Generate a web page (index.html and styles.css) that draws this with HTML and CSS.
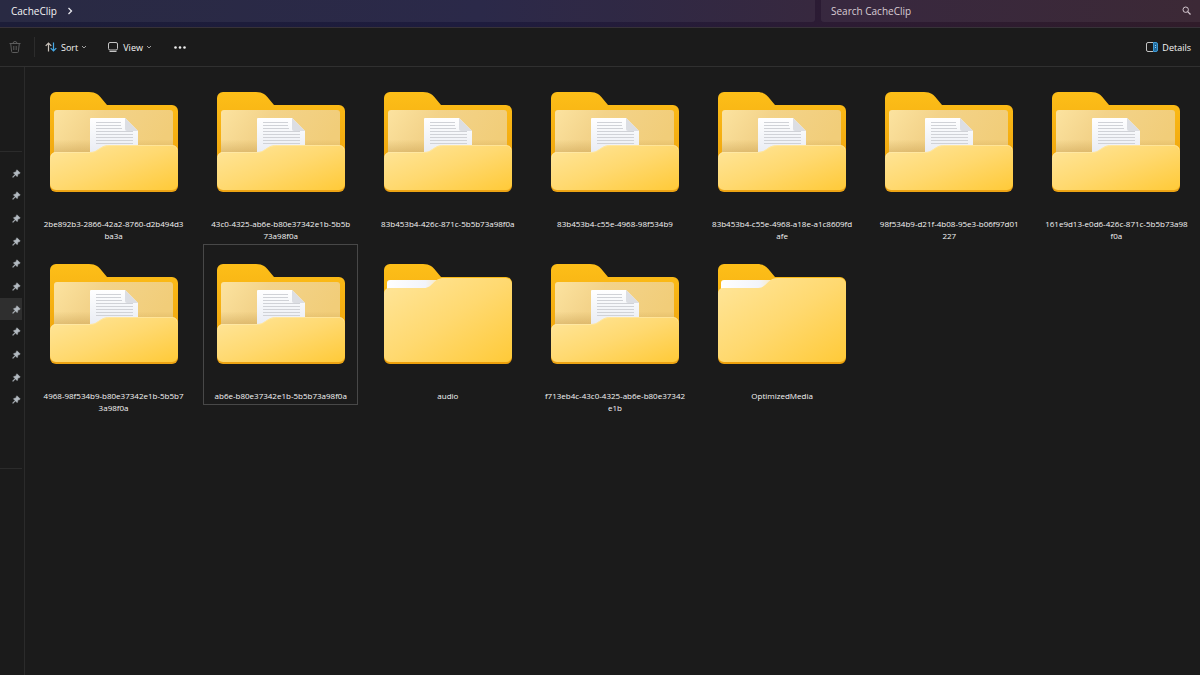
FILE: index.html
```
<!DOCTYPE html>
<html lang="en">
  <head>
    <meta charset="UTF-8" />
    <meta name="viewport" content="width=device-width, initial-scale=1.0" />
    <title>CacheClip</title>
    <link rel="stylesheet" href="styles.css">
  </head>
  <body>
    <!-- shared icons -->
    <svg class="defs" aria-hidden="true">
      <defs>
        <linearGradient id="back" x1="0" y1="0" x2="0" y2="1">
          <stop offset="0" stop-color="#fdbe18" />
          <stop offset="1" stop-color="#eda00c" />
        </linearGradient>
        <linearGradient id="inner" x1="0" y1="0" x2="1" y2="0.3">
          <stop offset="0" stop-color="#fce3a0" />
          <stop offset="0.4" stop-color="#f3d38a" />
          <stop offset="1" stop-color="#f1cd79" />
        </linearGradient>
        <linearGradient id="shade" x1="0" y1="0" x2="0" y2="1">
          <stop offset="0.7" stop-color="#b98d3c" stop-opacity="0" />
          <stop offset="1" stop-color="#b98d3c" stop-opacity="0.35" />
        </linearGradient>
        <linearGradient id="front" x1="0" y1="0" x2="1" y2="1">
          <stop offset="0" stop-color="#ffe69c" />
          <stop offset="0.5" stop-color="#ffd970" />
          <stop offset="1" stop-color="#ffca38" />
        </linearGradient>
        <linearGradient id="paper" x1="0" y1="0" x2="0" y2="1">
          <stop offset="0" stop-color="#ffffff" />
          <stop offset="1" stop-color="#e4e8f1" />
        </linearGradient>
        <linearGradient id="strip" x1="0" y1="0" x2="1" y2="0">
          <stop offset="0" stop-color="#ffffff" />
          <stop offset="0.7" stop-color="#f2f4fa" />
          <stop offset="1" stop-color="#fbe6b0" />
        </linearGradient>
      </defs>
      <symbol id="folder-files" viewBox="0 0 128 102">
        <path fill="url(#back)" d="M0 7a6 6 0 0 1 6-6H39C46 1 49 4 52 8L57 14H122a6 6 0 0 1 6 6V90H0Z" />
        <path fill="url(#inner)" d="M4 22a3 3 0 0 1 3-3H120a3 3 0 0 1 3 3V70H4Z" />
        <path fill="url(#shade)" d="M4 22a3 3 0 0 1 3-3H120a3 3 0 0 1 3 3V61H4Z" />
        <path fill="url(#paper)" d="M40 28a1 1 0 0 1 1-1H75L88 40V70H40Z" />
        <path fill="#dcdee3" d="M75 27V38a2 2 0 0 0 2 2H88Z" />
        <path fill="none" stroke="#d0d2d7" d="M46 31.500H71M46 34.500H71M46 37.500H72M46 40.500H83M46 43.500H83M46 46.500H83M46 49.500H83M46 52.500H83" />
        <path fill="#eda414" d="M0 67H128V95a6 6 0 0 1-6 6H6a6 6 0 0 1-6-6Z" />
        <path fill="url(#front)" d="M0 67a6 6 0 0 1 6-6H40C49 61 49 54 60 54H122a6 6 0 0 1 6 6V93a6 6 0 0 1-6 6H6a6 6 0 0 1-6-6Z" />
        <path fill="none" stroke="#ffeeb8" stroke-opacity="0.5" d="M1 66a5 5 0 0 1 5-4.500H40C49 61.500 49 54.500 60 54.500H122a5 5 0 0 1 5 4" />
      </symbol>
      <symbol id="folder-plain" viewBox="0 0 128 102">
        <path fill="url(#back)" d="M0 7a6 6 0 0 1 6-6H39C46 1 49 4 52 8L57 14H122a6 6 0 0 1 6 6V95a6 6 0 0 1-6 6H6a6 6 0 0 1-6-6Z" />
        <path fill="url(#strip)" d="M3 20a3 3 0 0 1 3-3H58V30H3Z" />
        <path fill="url(#front)" d="M0 30a5 5 0 0 1 5-5H40C49 25 49 15 60 15H122a6 6 0 0 1 6 6V93a6 6 0 0 1-6 6H6a6 6 0 0 1-6-6Z" />
      </symbol>
      <symbol id="pin" viewBox="0 0 10 10">
        <path fill="#b3bac1" stroke="#b3bac1" stroke-width="0.500" d="M5.500 0.800 9.200 4.500 8.300 5.200 7.800 5 6.300 6.500C6.500 7.400 6.300 8 5.700 8.500L3.900 6.700 1 9.500 0.500 9 3.300 6.100 1.500 4.300C2 3.700 2.700 3.500 3.500 3.700L5 2.200 4.800 1.700Z" />
      </symbol>
      <symbol id="chevron" viewBox="0 0 6 6">
        <path fill="none" stroke="#a0a0a0" d="M1 2 3 4 5 2" />
      </symbol>
    </svg>

    <header class="titlebar">
      <nav class="address" aria-label="Address">
        <a href="#">CacheClip</a>
        <svg class="crumb" viewBox="0 0 6 8" aria-hidden="true"><path fill="none" stroke="#e8e8ee" stroke-width="1.300" d="M1.500 1 4.500 4 1.500 7" /></svg>
      </nav>
      <form class="search">
        <input type="search" aria-label="Search CacheClip" placeholder="Search CacheClip" />
        <button type="button" aria-label="Search">
          <svg viewBox="0 0 9 9"><circle cx="3.700" cy="3.700" r="2.700" fill="none" stroke="#d5c8d0" /><path stroke="#d5c8d0" stroke-width="1.200" d="M5.700 5.700 8.500 8.500" /></svg>
        </button>
      </form>
    </header>

    <div class="toolbar">
      <button class="trash" type="button" aria-label="Delete">
        <svg viewBox="0 0 12 12" fill="none" stroke="#5c5c5c"><path d="M0.500 2.500H11.500M4 2.500a2 2 0 0 1 4 0M1.700 2.500 2.600 10.500a1 1 0 0 0 1 1H8.400a1 1 0 0 0 1-1L10.300 2.500M4.800 5V9M7.200 5V9" /></svg>
      </button>
      <button class="sort" type="button">
        <svg class="icon" viewBox="0 0 12 10" fill="none"><path stroke="#c9c2ba" stroke-width="1.200" d="M3.500 9.500V1M0.700 3.800 3.500 1 6.300 3.800" /><path stroke="#45a9e6" stroke-width="1.200" d="M8.500 0.500V9M5.700 6.200 8.500 9 11.300 6.200" /></svg>
        Sort
        <svg class="chevron"><use href="#chevron" /></svg>
      </button>
      <button class="view" type="button">
        <svg class="icon" viewBox="0 0 12 10" fill="none" stroke="#c4c4c4"><rect x="1.500" y="0.500" width="9" height="7.500" rx="1.500" /><path d="M2.500 9.500H9.500" /></svg>
        View
        <svg class="chevron"><use href="#chevron" /></svg>
      </button>
      <button class="more" type="button" aria-label="See more">
        <svg viewBox="0 0 12 3" fill="#eee"><circle cx="1.500" cy="1.500" r="1.300" /><circle cx="6" cy="1.500" r="1.300" /><circle cx="10.500" cy="1.500" r="1.300" /></svg>
      </button>
      <button class="details" type="button">
        <svg class="icon" viewBox="0 0 12 10"><path fill="#236a9c" stroke="#3e9bd6" d="M7.500 0.500H10a1.500 1.500 0 0 1 1.500 1.500V8A1.500 1.500 0 0 1 10 9.500H7.500Z" /><path fill="none" stroke="#c4c4c4" d="M7 0.500H2A1.500 1.500 0 0 0 0.500 2V8A1.500 1.500 0 0 0 2 9.500H7" /><path stroke="#8fd0f7" d="M9 3.500H10M9 5.500H10" /></svg>
        Details
      </button>
    </div>

    <div class="window">
      <aside class="sidebar">
        <ul class="pins">
          <li><svg><use href="#pin" /></svg></li>
          <li><svg><use href="#pin" /></svg></li>
          <li><svg><use href="#pin" /></svg></li>
          <li><svg><use href="#pin" /></svg></li>
          <li><svg><use href="#pin" /></svg></li>
          <li><svg><use href="#pin" /></svg></li>
          <li class="active"><svg><use href="#pin" /></svg></li>
          <li><svg><use href="#pin" /></svg></li>
          <li><svg><use href="#pin" /></svg></li>
          <li><svg><use href="#pin" /></svg></li>
          <li><svg><use href="#pin" /></svg></li>
        </ul>
      </aside>

      <main class="files">
        <a class="file" href="#"><svg><use href="#folder-files" /></svg><span>2be892b3-2866-42a2-8760-d2b494d3<br>ba3a</span></a>
        <a class="file" href="#"><svg><use href="#folder-files" /></svg><span>43c0-4325-ab6e-b80e37342e1b-5b5b<br>73a98f0a</span></a>
        <a class="file" href="#"><svg><use href="#folder-files" /></svg><span>83b453b4-426c-871c-5b5b73a98f0a</span></a>
        <a class="file" href="#"><svg><use href="#folder-files" /></svg><span>83b453b4-c55e-4968-98f534b9</span></a>
        <a class="file" href="#"><svg><use href="#folder-files" /></svg><span>83b453b4-c55e-4968-a18e-a1c8609fd<br>afe</span></a>
        <a class="file" href="#"><svg><use href="#folder-files" /></svg><span>98f534b9-d21f-4b08-95e3-b06f97d01<br>227</span></a>
        <a class="file" href="#"><svg><use href="#folder-files" /></svg><span>161e9d13-e0d6-426c-871c-5b5b73a98<br>f0a</span></a>
        <a class="file" href="#"><svg><use href="#folder-files" /></svg><span>4968-98f534b9-b80e37342e1b-5b5b7<br>3a98f0a</span></a>
        <a class="file selected" href="#"><svg><use href="#folder-files" /></svg><span>ab6e-b80e37342e1b-5b5b73a98f0a</span></a>
        <a class="file" href="#"><svg><use href="#folder-plain" /></svg><span>audio</span></a>
        <a class="file" href="#"><svg><use href="#folder-files" /></svg><span>f713eb4c-43c0-4325-ab6e-b80e37342<br>e1b</span></a>
        <a class="file" href="#"><svg><use href="#folder-plain" /></svg><span>OptimizedMedia</span></a>
      </main>
    </div>
  </body>
</html>
```

FILE: styles.css
```
* {
  box-sizing: border-box;
}
body {
  margin: 0;
  min-height: 100vh;
  display: flex;
  flex-direction: column;
  background-color: #1b1b1b;
  color: #f5f5f5;
  font-family: "Open Sans", "Noto Sans", sans-serif;
  font-size: 8px;
}
svg {
  display: block;
  flex-shrink: 0;
}
.defs {
  position: absolute;
  width: 0;
  height: 0;
}
a {
  color: inherit;
  text-decoration: none;
}
button {
  display: flex;
  align-items: center;
  padding: 0;
  border: none;
  background: none;
  color: inherit;
  font: inherit;
}

/* address and search */
.titlebar {
  display: grid;
  grid-template-columns: 815fr 379fr;
  gap: 6px;
  height: 28px;
  padding-bottom: 5px;
  border-bottom: 1px solid #373238;
  background: linear-gradient(to right, #1c1d38, #1e1c3e 40%, #2c1b33 70%, #301c2a);
}
.address,
.search {
  display: flex;
  align-items: center;
  padding-bottom: 1px;
  background-color: rgba(255, 255, 255, 0.06);
  font-size: 10px;
}
.address {
  gap: 10px;
  padding-left: 11px;
  border-radius: 0 0 3px 0;
}
.crumb {
  width: 6px;
  height: 8px;
}
.search {
  padding-left: 10px;
  padding-right: 9px;
  border-radius: 0 0 0 3px;
}
.search input {
  flex: 1;
  min-width: 0;
  padding: 0;
  border: none;
  outline: none;
  background: none;
  color: #d8ccd4;
  font: inherit;
}
.search input::placeholder {
  color: #d8ccd4;
}
.search svg {
  width: 9px;
  height: 9px;
}

/* commands */
.toolbar {
  display: flex;
  align-items: center;
  height: 39px;
  padding: 0 9px;
  border-bottom: 1px solid #303030;
  font-size: 9px;
}
.toolbar .icon {
  width: 12px;
  height: 10px;
  margin-right: 4px;
}
.toolbar .chevron {
  width: 6px;
  height: 6px;
  margin-left: 3px;
}
.trash {
  height: 20px;
  padding-right: 13px;
  border-right: 1px solid #2c2c2c;
}
.trash svg {
  width: 12px;
  height: 12px;
}
.sort {
  margin-left: 10px;
}
.view {
  margin-left: 20px;
}
.more {
  margin-left: 22px;
}
.more svg {
  width: 12px;
  height: 3px;
}
.details {
  margin-left: auto;
}

/* pinned folders and file grid */
.window {
  flex: 1;
  display: flex;
}
.sidebar {
  width: 25px;
  padding-top: 84px;
  padding-right: 2px;
  border-right: 1px solid #2b2b2b;
}
.pins {
  display: grid;
  grid-auto-rows: 1fr;
  height: 318px;
  margin: 0;
  padding: 10px 0 57px;
  border: solid #2b2b2b;
  border-width: 1px 0;
  list-style: none;
}
.pins li {
  display: flex;
  align-items: center;
  padding-left: 12px;
}
.pins svg {
  width: 9px;
  height: 9px;
}
.pins .active {
  background-color: #2f2f2f;
}
.files {
  flex: 1;
  display: grid;
  grid-template-columns: repeat(7, 1fr);
  grid-auto-rows: 161px;
  align-content: start;
  row-gap: 11px;
  padding: 5px 0 0 5px;
}
.file {
  justify-self: center;
  display: flex;
  flex-direction: column;
  align-items: center;
  gap: 25px;
  width: 155px;
  padding-top: 18px;
  border: 1px solid transparent;
  line-height: 12px;
  text-align: center;
  white-space: nowrap;
}
.file svg {
  width: 128px;
  height: 102px;
}
.selected {
  border-color: #484848;
}
```
